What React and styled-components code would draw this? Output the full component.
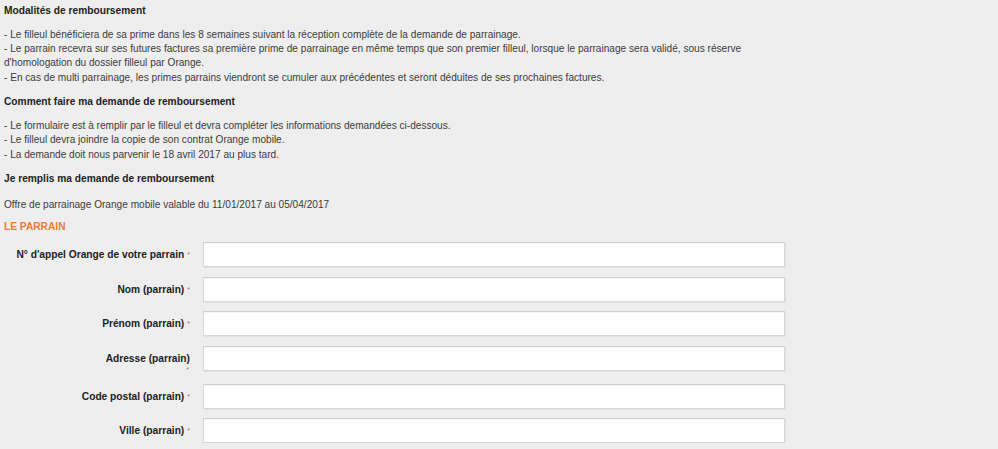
import React from "react";
import styled, { createGlobalStyle } from "styled-components";

const Global = createGlobalStyle`
  html, body { margin: 0; padding: 0; background: #eeeeee; }
  body { font-family: "Liberation Sans", Arial, sans-serif; color: #333; }
`;

const Page = styled.div`
  padding: 3.6px 4px 0 4px;
  font-size: 10.1px;
  line-height: 14.4px;
`;

const Heading = styled.h3`
  margin: 0 0 ${(p) => p.$after || 9.6}px 0;
  font-size: 10.2px;
  line-height: 14.4px;
  font-weight: bold;
  color: #222;
`;

const Para = styled.p`
  margin: 0 0 ${(p) => p.$after || 9.6}px 0;
  color: #3c3c3c;
`;

const Section = styled.h4`
  margin: 0 0 8px 0;
  font-size: 10.2px;
  line-height: 14.4px;
  font-weight: bold;
  color: #ef7a32;
  text-transform: uppercase;
`;

const Form = styled.div`
  display: flex;
  flex-direction: column;
  gap: 9.6px;
  margin-left: -4px;
`;

const Row = styled.div`
  display: grid;
  grid-template-columns: 190px 582px;
  column-gap: 13px;
  align-items: start;
`;

const Label = styled.label`
  padding-top: 6px;
  text-align: right;
  font-weight: bold;
  font-size: 10.2px;
  color: #222;
  line-height: 14.4px;
`;

const Req = styled.span`
  display: ${(p) => (p.$stacked ? "block" : "inline")};
  font-size: 7px;
  line-height: ${(p) => (p.$stacked ? "8px" : "14.4px")};
  color: #7a7a7a;
  margin-left: ${(p) => (p.$stacked ? "0" : "3px")};
  padding-right: ${(p) => (p.$stacked ? "1px" : "0")};
  vertical-align: 1px;
  font-weight: normal;
  text-align: right;
`;

const Input = styled.input`
  box-sizing: border-box;
  height: 25px;
  width: 582px;
  margin: 0;
  background: #fff;
  border: 1px solid #d8d8d8;
  border-top-color: #cfcfcf;
  box-shadow: inset 0 1px 1px rgba(0, 0, 0, 0.04), 1px 1px 0 #e2e2e2;
  font: inherit;
  padding: 0 6px;
  outline: none;
`;

const fields = [
  { label: "N° d'appel Orange de votre parrain" },
  { label: "Nom (parrain)" },
  { label: "Prénom (parrain)" },
  { label: "Adresse (parrain)", stacked: true },
  { label: "Code postal (parrain)" },
  { label: "Ville (parrain)" },
];

export default function App() {
  return (
    <Page>
      <Global />
      <Heading>Modalités de remboursement</Heading>
      <Para>
        - Le filleul bénéficiera de sa prime dans les 8 semaines suivant la réception complète de la demande de parrainage.
        <br />
        - Le parrain recevra sur ses futures factures sa première prime de parrainage en même temps que son premier filleul, lorsque le parrainage sera validé, sous réserve
        <br />
        d'homologation du dossier filleul par Orange.
        <br />
        - En cas de multi parrainage, les primes parrains viendront se cumuler aux précédentes et seront déduites de ses prochaines factures.
      </Para>
      <Heading>Comment faire ma demande de remboursement</Heading>
      <Para>
        - Le formulaire est à remplir par le filleul et devra compléter les informations demandées ci-dessous.
        <br />
        - Le filleul devra joindre la copie de son contrat Orange mobile.
        <br />
        - La demande doit nous parvenir le 18 avril 2017 au plus tard.
      </Para>
      <Heading $after={11.6}>Je remplis ma demande de remboursement</Heading>
      <Para $after={7.6}>Offre de parrainage Orange mobile valable du 11/01/2017 au 05/04/2017</Para>
      <Section>Le parrain</Section>
      <Form>
        {fields.map((f) => (
          <Row key={f.label}>
            <Label>
              {f.label}
              <Req $stacked={f.stacked}>*</Req>
            </Label>
            <Input type="text" />
          </Row>
        ))}
      </Form>
    </Page>
  );
}
